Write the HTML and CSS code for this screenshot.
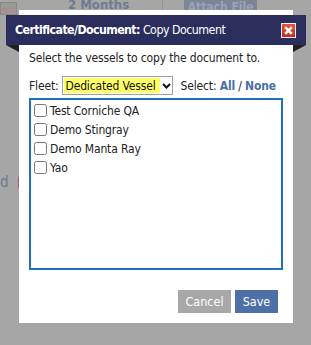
FILE: index.html
```html
<!DOCTYPE html>
<html lang="en">
<head>
    <meta charset="UTF-8">
    <title>Copy Document</title>
    <link rel="stylesheet" href="styles.css">
</head>
<body>

    <div class="page">
        <div class="toolbar">
            <div class="cal-icon">
                <svg width="17" height="13" viewBox="0 0 17 13">
                    <rect x="0.5" y="0.5" width="16" height="12" fill="#9a9a9a" stroke="#8a8a8a"/>
                    <rect x="1" y="1" width="15" height="3" fill="#8fa38a"/>
                    <path d="M1 7h15M1 10h15M4.5 4v9M8.5 4v9M12.5 4v9" stroke="#b08a8a" stroke-width="1"/>
                </svg>
            </div>
            <span class="period">2 Months</span>
            <span class="sep"></span>
            <span class="attach">Attach File</span>
        </div>
        <div class="page-row">
            <span class="page-text">d</span>
            <span class="page-mark"></span>
        </div>
    </div>

    <div class="dialog">
        <div class="dialog-head">
            <span class="title"><b>Certificate/Document:</b> Copy Document</span>
            <span class="close">
                <svg width="15" height="15" viewBox="0 0 15 15">
                    <defs>
                        <linearGradient id="cl" x1="0" y1="0" x2="0" y2="1">
                            <stop offset="0" stop-color="#e8553a"/>
                            <stop offset="1" stop-color="#c12a1a"/>
                        </linearGradient>
                    </defs>
                    <rect x="0.5" y="0.5" width="14" height="14" fill="url(#cl)" stroke="#f2f2f2"/>
                    <path d="M4.2 4.2l6.6 6.6M10.8 4.2l-6.6 6.6" stroke="#ffffff" stroke-width="2.6"/>
                </svg>
            </span>
        </div>

        <div class="dialog-body">
            <p class="intro">Select the vessels to copy the document to.</p>

            <div class="fleet-row">
                <label for="fleet">Fleet:</label>
                <div class="fleet-box">
                    <select id="fleet" class="fleet">
                        <option>Dedicated Vessel</option>
                    </select>
                    <svg class="chev" width="9" height="6" viewBox="0 0 9 6">
                        <path d="M1 1l3.5 3.5L8 1" fill="none" stroke="#111" stroke-width="2"/>
                    </svg>
                </div>
                <span class="pick">Select: <a href="#">All</a> / <a href="#">None</a></span>
            </div>

            <div class="vessel-list">
                <label><input type="checkbox">Test Corniche QA</label>
                <label><input type="checkbox">Demo Stingray</label>
                <label><input type="checkbox">Demo Manta Ray</label>
                <label><input type="checkbox">Yao</label>
            </div>

            <div class="actions">
                <button class="btn cancel">Cancel</button>
                <button class="btn save">Save</button>
            </div>
        </div>
    </div>

</body>
</html>
```

FILE: styles.css
```css
body {
    margin: 0;
    width: 311px;
    height: 345px;
    overflow: hidden;
    background: #a6a6a6;
    font-family: "DejaVu Sans Condensed", "DejaVu Sans", sans-serif;
    position: relative;
}
.page {
    height: 100%;
}
.toolbar {
    display: flex;
    align-items: flex-start;
    height: 16px;
    overflow: hidden;
}
.cal-icon {
    width: 18px;
    height: 14px;
}
.period {
    margin-left: 50px;
    margin-top: -2px;
    font-size: 13px;
    line-height: 14px;
    font-weight: bold;
    color: #6f7c8f;
}
.sep {
    width: 1px;
    height: 16px;
    background: #959595;
    margin-left: 33px;
}
.attach {
    margin-left: 21px;
    width: 73px;
    height: 11px;
    background: #7d8597;
    color: #9aa3b4;
    font-size: 12px;
    font-weight: bold;
    text-align: center;
    line-height: 15px;
    overflow: hidden;
}
.page-row {
    display: flex;
    align-items: center;
    margin-top: 157px;
    gap: 9px;
}
.page-text {
    color: #6c7a92;
    font-size: 15px;
}
.page-mark {
    width: 4px;
    height: 13px;
    background: #a2615d;
    border-radius: 2px;
}
.dialog {
    position: absolute;
    top: 10px;
    left: 19px;
    width: 274px;
    height: 313px;
    background: white;
}
.dialog-head {
    position: relative;
    margin: 5px -13px 0;
    height: 30px;
    background: #2b2e5c;
    display: flex;
    align-items: center;
    justify-content: space-between;
    padding: 0 10px 0 9px;
    color: white;
}
.dialog-head::before,
.dialog-head::after {
    content: '';
    position: absolute;
    top: 30px;
    border-top: 7px solid #1f1f1f;
}
.dialog-head::before {
    left: 0;
    border-left: 13px solid transparent;
}
.dialog-head::after {
    right: 0;
    border-right: 13px solid transparent;
}
.title {
    font-size: 12.3px;
    letter-spacing: -0.5px;
}
.title b {
    letter-spacing: -0.6px;
}
.close {
    display: flex;
    margin-top: 1px;
}
.dialog-body {
    padding: 0 10px;
    font-size: 12px;
    letter-spacing: -0.15px;
    color: #222;
}
.intro {
    margin: 5px 0 0;
    line-height: 16px;
}
.fleet-row {
    display: flex;
    align-items: center;
    margin-top: 10px;
    height: 19px;
}
.fleet-box {
    box-sizing: border-box;
    margin-left: 4px;
    width: 111px;
    height: 19px;
    border: 1px solid #a0a0a0;
    display: flex;
    align-items: center;
    padding: 1px;
    gap: 2px;
}
.fleet {
    appearance: none;
    -webkit-appearance: none;
    width: 96px;
    height: 15px;
    font-family: inherit;
    font-size: 12px;
    letter-spacing: -0.15px;
    background: #ffff66;
    border: none;
    border-radius: 0;
    padding: 0 0 0 1px;
    color: #111;
    outline: none;
}
.chev {
    display: block;
}
.pick {
    margin-left: 7px;
    white-space: nowrap;
}
.pick a {
    color: #4a6fa8;
    font-weight: bold;
    text-decoration: none;
}
.vessel-list {
    box-sizing: border-box;
    margin-top: 3px;
    height: 172px;
    border: 2px solid #1f6fba;
    padding: 1px 3px;
    display: flex;
    flex-direction: column;
}
.vessel-list label {
    display: flex;
    align-items: center;
    height: 19px;
}
.vessel-list input {
    margin: 0 3px 0 0;
    width: 13px;
    height: 13px;
}
.actions {
    display: flex;
    justify-content: flex-end;
    gap: 4px;
    margin-top: 20px;
    padding-right: 5px;
}
.btn {
    border: none;
    color: white;
    font-family: inherit;
    font-size: 12.5px;
    height: 23px;
    padding: 0 5px;
}
.cancel {
    background: #a8a8a8;
    width: 53px;
}
.save {
    background: #4d70a6;
    width: 43px;
}
```
